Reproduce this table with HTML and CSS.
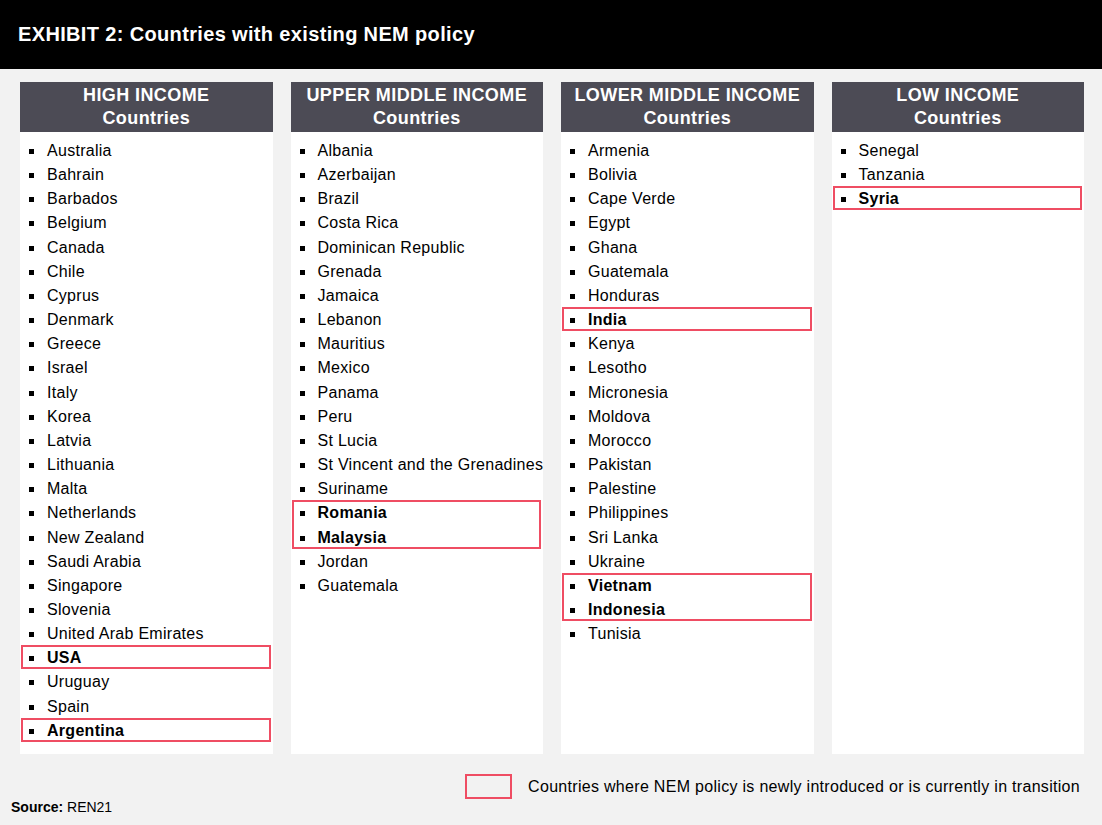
FILE: index.html
```html
<!DOCTYPE html>
<html>
<head>
<meta charset="utf-8">
<link rel="stylesheet" href="styles.css">
</head>
<body>
<div class="page">
  <header class="title-bar"><h1>EXHIBIT 2: Countries with existing NEM policy</h1></header>
  <main class="columns">
    <section class="col">
      <h2 class="col-head">HIGH INCOME<br>Countries</h2>
      <ul class="list">
        <li>Australia</li><li>Bahrain</li><li>Barbados</li><li>Belgium</li><li>Canada</li><li>Chile</li><li>Cyprus</li><li>Denmark</li><li>Greece</li><li>Israel</li><li>Italy</li><li>Korea</li><li>Latvia</li><li>Lithuania</li><li>Malta</li><li>Netherlands</li><li>New Zealand</li><li>Saudi Arabia</li><li>Singapore</li><li>Slovenia</li><li>United Arab Emirates</li>
        <li class="hl-group"><ul class="list"><li class="b">USA</li></ul></li>
        <li>Uruguay</li><li>Spain</li>
        <li class="hl-group"><ul class="list"><li class="b">Argentina</li></ul></li>
      </ul>
    </section>
    <section class="col">
      <h2 class="col-head">UPPER MIDDLE INCOME<br>Countries</h2>
      <ul class="list">
        <li>Albania</li><li>Azerbaijan</li><li>Brazil</li><li>Costa Rica</li><li>Dominican Republic</li><li>Grenada</li><li>Jamaica</li><li>Lebanon</li><li>Mauritius</li><li>Mexico</li><li>Panama</li><li>Peru</li><li>St Lucia</li><li>St Vincent and the Grenadines</li><li>Suriname</li>
        <li class="hl-group"><ul class="list"><li class="b">Romania</li><li class="b">Malaysia</li></ul></li>
        <li>Jordan</li><li>Guatemala</li>
      </ul>
    </section>
    <section class="col">
      <h2 class="col-head">LOWER MIDDLE INCOME<br>Countries</h2>
      <ul class="list">
        <li>Armenia</li><li>Bolivia</li><li>Cape Verde</li><li>Egypt</li><li>Ghana</li><li>Guatemala</li><li>Honduras</li>
        <li class="hl-group"><ul class="list"><li class="b">India</li></ul></li>
        <li>Kenya</li><li>Lesotho</li><li>Micronesia</li><li>Moldova</li><li>Morocco</li><li>Pakistan</li><li>Palestine</li><li>Philippines</li><li>Sri Lanka</li><li>Ukraine</li>
        <li class="hl-group"><ul class="list"><li class="b">Vietnam</li><li class="b">Indonesia</li></ul></li>
        <li>Tunisia</li>
      </ul>
    </section>
    <section class="col">
      <h2 class="col-head">LOW INCOME<br>Countries</h2>
      <ul class="list">
        <li>Senegal</li><li>Tanzania</li>
        <li class="hl-group"><ul class="list"><li class="b">Syria</li></ul></li>
      </ul>
    </section>
  </main>
  <div class="legend">
    <span class="legend-box"></span>
    <span class="legend-text">Countries where NEM policy is newly introduced or is currently in transition</span>
  </div>
  <footer class="source"><strong>Source:</strong> REN21</footer>
</div>
</body>
</html>
```
FILE: styles.css
```css
* { box-sizing: border-box; }
html, body { margin: 0; padding: 0; }
body {
  background: #f2f2f2;
  font-family: "Liberation Sans", Arial, sans-serif;
  color: #000;
  width: 1102px;
  height: 825px;
  overflow: hidden;
}
.page { display: flex; flex-direction: column; height: 825px; }
.page > * { flex-shrink: 0; }
.title-bar {
  background: #000;
  height: 69px;
  padding: 23px 0 0 18px;
}
.title-bar h1 {
  margin: 0;
  color: #fff;
  font-size: 20px;
  letter-spacing: 0.35px;
  line-height: 23px;
  font-weight: bold;
}
.columns {
  display: grid;
  grid-template-columns: repeat(4, minmax(0, 1fr));
  column-gap: 18px;
  padding: 13px 18px 0 20px;
  height: 685px;
}
.col { background: #fff; display: flex; flex-direction: column; min-width: 0; }
.col-head {
  margin: 0;
  background: #4c4b55;
  color: #fff;
  text-align: center;
  font-size: 18px;
  letter-spacing: 0.4px;
  line-height: 23px;
  font-weight: bold;
  height: 50px;
  padding-top: 2px;
}
.list { list-style: none; margin: 0; padding: 7px 0 0 0; }
.list .list { padding: 0; }
.list li {
  position: relative;
  font-size: 16px;
  letter-spacing: 0.28px;
  line-height: 24.17px;
  height: 24.17px;
  padding-left: 27px;
  white-space: nowrap;
}
.list li::before {
  content: "";
  position: absolute;
  left: 9px;
  top: 10px;
  width: 5px;
  height: 5px;
  background: #000;
}
.list li.hl-group { padding-left: 0; height: auto; }
.list li.hl-group::before { display: none; }
.list li.hl-group::after {
  content: "";
  position: absolute;
  top: -1px;
  bottom: 1px;
  left: 1px;
  right: 2px;
  border: 2px solid #ef4d63;
  pointer-events: none;
}
.list li.b { font-weight: bold; }
.legend {
  display: flex;
  justify-content: flex-end;
  align-items: center;
  gap: 16px;
  padding: 20px 22px 0 0;
  height: 45px;
}
.legend-box {
  width: 47px;
  height: 25px;
  border: 2px solid #ef4d63;
}
.legend-text { font-size: 16px; letter-spacing: 0.3px; }
.source {
  font-size: 14px;
  padding: 0 0 0 11px;
  line-height: 16px;
}
```
